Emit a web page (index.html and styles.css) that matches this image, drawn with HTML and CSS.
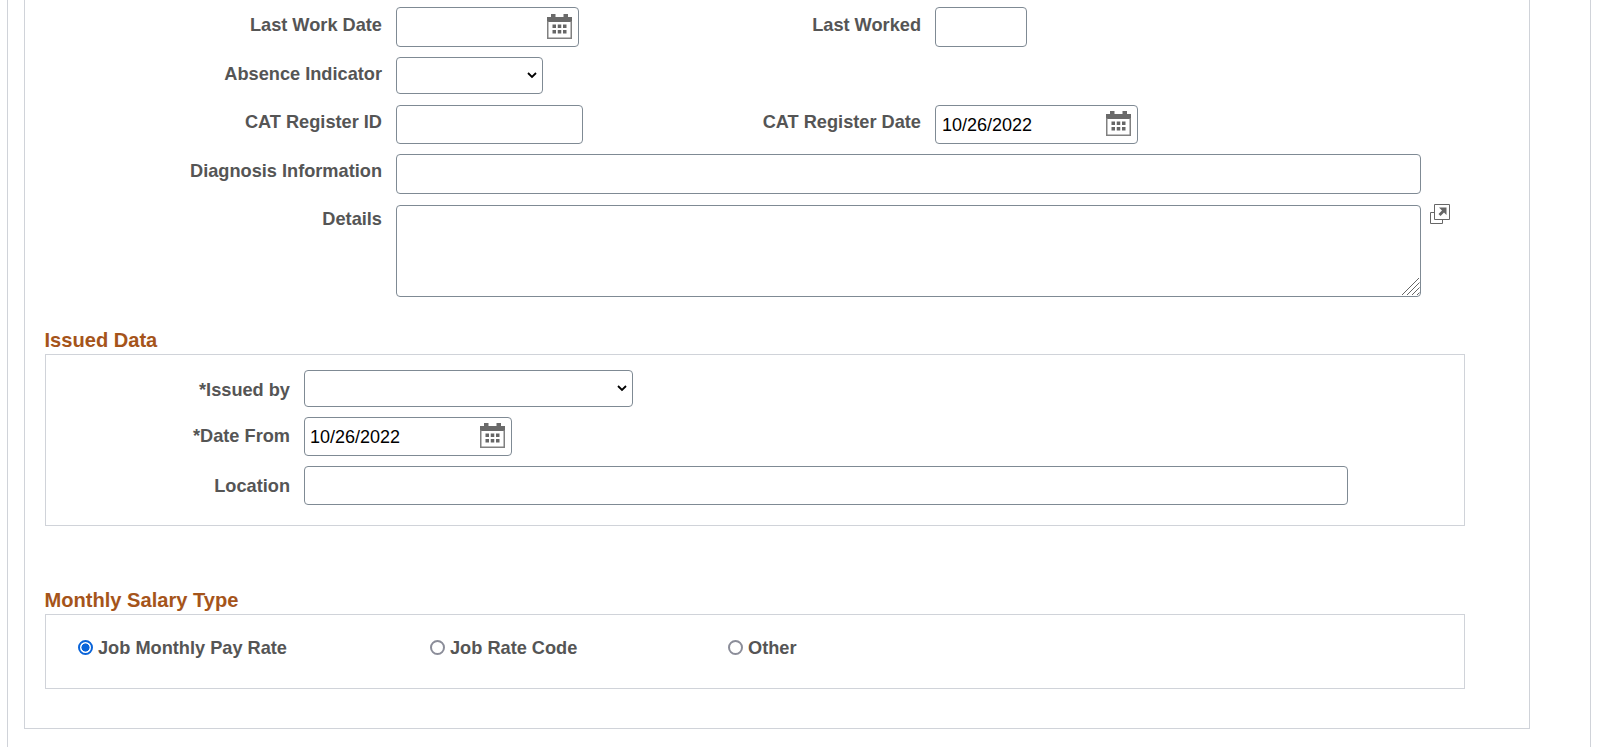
FILE: index.html
```html
<!DOCTYPE html>
<html lang="en">
<head>
<meta charset="utf-8">
<title>Absence details</title>
<link rel="stylesheet" href="styles.css">
</head>
<body>
<div class="page">
  <div class="panel">
    <div class="form">
      <label class="lbl lbl-a">Last Work Date</label>
      <div class="date w-lastwork"><input class="date-input" type="text">
        <svg class="cal" viewBox="0 0 25 25"><use href="#cal"/></svg></div>
      <label class="lbl lbl-a">Last Worked</label>
      <input class="ctl w-lastworked h40" type="text">

      <label class="lbl lbl-b">Absence Indicator</label>
      <select class="ctl pick w-absence h37"><option></option></select>
      <span class="spacer"></span>
      <span class="spacer"></span>

      <label class="lbl lbl-b push">CAT Register ID</label>
      <input class="ctl w-catid h39 push" type="text">
      <label class="lbl lbl-b push">CAT Register Date</label>
      <div class="date w-catdate h39 push"><input class="date-input" type="text" value="10/26/2022">
        <svg class="cal" viewBox="0 0 25 25"><use href="#cal"/></svg></div>

      <label class="lbl lbl-b">Diagnosis Information</label>
      <input class="ctl wide h40" type="text">

      <label class="lbl lbl-c">Details</label>
      <div class="details-cell">
        <div class="area-wrap">
          <textarea class="ctl area"></textarea>
          <svg class="grip" viewBox="0 0 19 19">
            <path d="M1 18 18 1M6 18 18.500 5.500M11 18l7.500-7.500M16 18l2.500-2.500"/>
          </svg>
        </div>
        <svg class="expand" viewBox="0 0 20 20">
          <path class="expand-back" d="M.5 8.500h12v11H.5z"/>
          <path class="expand-front" d="M4.500.5h15v15h-15z"/>
          <path class="expand-arrow" d="M9 3.500h7.500V11l-2.500-2.500-3.500 3.500-2-2 3.500-3.500z"/>
        </svg>
      </div>
    </div>

    <h2 class="group-title title-issued">Issued Data</h2>
    <div class="group group-issued">
      <label class="lbl2 lbl2-a">*Issued by</label>
      <select class="ctl pick w-issued h37"><option></option></select>

      <label class="lbl2 lbl2-b">*Date From</label>
      <div class="date w-datefrom h39"><input class="date-input" type="text" value="10/26/2022">
        <svg class="cal" viewBox="0 0 25 25"><use href="#cal"/></svg></div>

      <label class="lbl2 lbl2-a">Location</label>
      <input class="ctl w-location h39" type="text">
    </div>

    <h2 class="group-title title-salary">Monthly Salary Type</h2>
    <div class="group group-salary">
      <label class="radio r1"><input type="radio" name="salary" checked>Job Monthly Pay Rate</label>
      <label class="radio r2"><input type="radio" name="salary">Job Rate Code</label>
      <label class="radio"><input type="radio" name="salary">Other</label>
    </div>
  </div>
</div>
<svg class="defs" aria-hidden="true">
  <symbol id="cal" viewBox="0 0 25 25">
    <path fill="#6a6a6a" d="M0 3h4V0h4.500v3h8V0H21v3h4v5H0z"/>
    <path fill="none" stroke="#808080" stroke-width="1.500" d="M.75 7v17.250h23.500V7"/>
    <path fill="#666" d="M5.500 10.500h3.500V14H5.500zM10.750 10.500h3.500V14h-3.500zM16 10.500h3.500V14H16zM5.500 16h3.500v3.500H5.500zM10.750 16h3.500v3.500h-3.500zM16 16h3.500v3.500H16z"/>
  </symbol>
</svg>
</body>
</html>
```
FILE: styles.css
```css
* { box-sizing: border-box; }
html, body { margin: 0; height: 100%; background: #fff; overflow: hidden; }
body { font-family: "Liberation Sans", Arial, sans-serif; color: #555; }
.defs { display: none; }
.page {
  margin-left: 7px;
  width: 1584px;
  height: 747px;
  padding-left: 16px;
  border-left: 1px solid #d0d3d9;
  border-right: 1px solid #d0d3d9;
}
.panel {
  width: 1506px;
  height: 729px;
  padding-top: 7px;
  border: 1px solid #d0d3d9;
  border-top: 0;
}
.form {
  display: grid;
  grid-template-columns: 357px 187px 324px 1fr;
  column-gap: 14px;
  row-gap: 10px;
  align-items: start;
}
.lbl, .lbl2 {
  font-size: 18.2px;
  font-weight: 700;
  line-height: 20px;
  text-align: right;
  color: #555;
}
.lbl-a { padding-top: 8px; }
.lbl-b { padding-top: 7px; }
.lbl-c { padding-top: 5px; }
.push { margin-top: 1px; }
.ctl, .date {
  display: block;
  border: 1px solid #7f8a94;
  border-radius: 4px;
  background: #fff;
  font: 18px "Liberation Sans", Arial, sans-serif;
  color: #000;
  margin-bottom: 0;
}
.pick {
  appearance: none;
  background: #fff url("data:image/svg+xml,%3Csvg xmlns='http://www.w3.org/2000/svg' width='10' height='7'%3E%3Cpath d='M1 1l4 4 4-4' fill='none' stroke='%23000' stroke-width='1.800'/%3E%3C/svg%3E") no-repeat right 5px center;
}
.date { display: flex; align-items: center; padding-right: 6px; height: 40px; }
.date-input {
  flex: 1;
  min-width: 0;
  border: 0;
  outline: 0;
  padding: 2px 0 0 6px;
  background: transparent;
  font: inherit;
  color: #000;
}
.cal { width: 25px; height: 25px; flex: none; margin-bottom: 1px; }
.h37 { height: 37px; }
.h39 { height: 39px; }
.h40 { height: 40px; }
.h39 .cal { margin-bottom: 2px; }
.w-lastwork { width: 183px; }
.w-lastworked { width: 92px; }
.w-absence { width: 147px; }
.w-catid { width: 187px; }
.w-catdate { width: 203px; }
.wide { grid-column: 2 / 5; width: 1025px; }
.spacer { display: block; }
.details-cell {
  grid-column: 2 / 5;
  display: flex;
  align-items: flex-start;
  gap: 9px;
  margin-top: 1px;
}
.area-wrap { position: relative; width: 1025px; height: 92px; }
.area { width: 100%; height: 100%; padding: 4px 6px; resize: none; }
.grip {
  position: absolute;
  right: 1px;
  bottom: 1px;
  width: 19px;
  height: 19px;
  fill: none;
  stroke: #666;
  stroke-width: 1;
}
.expand { width: 20px; height: 20px; margin-top: -1px; flex: none; }
.expand-back, .expand-front { fill: #fff; stroke: #666; stroke-width: 1; }
.expand-arrow { fill: #666; }
.group-title {
  margin: 0 0 0 19.500px;
  font-size: 20.100px;
  font-weight: 700;
  line-height: 24px;
  height: 26px;
  color: #a5541a;
}
.title-issued { margin-top: 31px; }
.title-salary { margin-top: 62px; }
.group {
  margin-left: 20px;
  width: 1420px;
  border: 1px solid #d0d3d9;
}
.group-issued {
  display: grid;
  grid-template-columns: 244px 1fr;
  column-gap: 14px;
  row-gap: 10px;
  align-items: start;
  padding: 15px 0 20px;
}
.lbl2-a { padding-top: 10px; }
.lbl2-b { padding-top: 9px; }
.w-issued { width: 329px; }
.w-datefrom { width: 208px; }
.w-datefrom .date-input { padding-left: 5px; }
.w-location { width: 1044px; }
.group-salary {
  display: flex;
  align-items: center;
  height: 75px;
  padding: 0 0 8px 32px;
}
.radio {
  display: flex;
  align-items: center;
  gap: 5px;
  font-size: 18.2px;
  font-weight: 700;
  line-height: 20px;
  color: #555;
}
.radio input {
  appearance: none;
  width: 15px;
  height: 15px;
  margin: 0;
  border: 2px solid #8b8d99;
  border-radius: 50%;
  background: #fff;
}
.radio input:checked {
  border-color: #0a64d9;
  background: radial-gradient(circle, #0a64d9 0 3.800px, #fff 4.300px);
}
.r1 { width: 352px; }
.r2 { width: 298px; }
```
